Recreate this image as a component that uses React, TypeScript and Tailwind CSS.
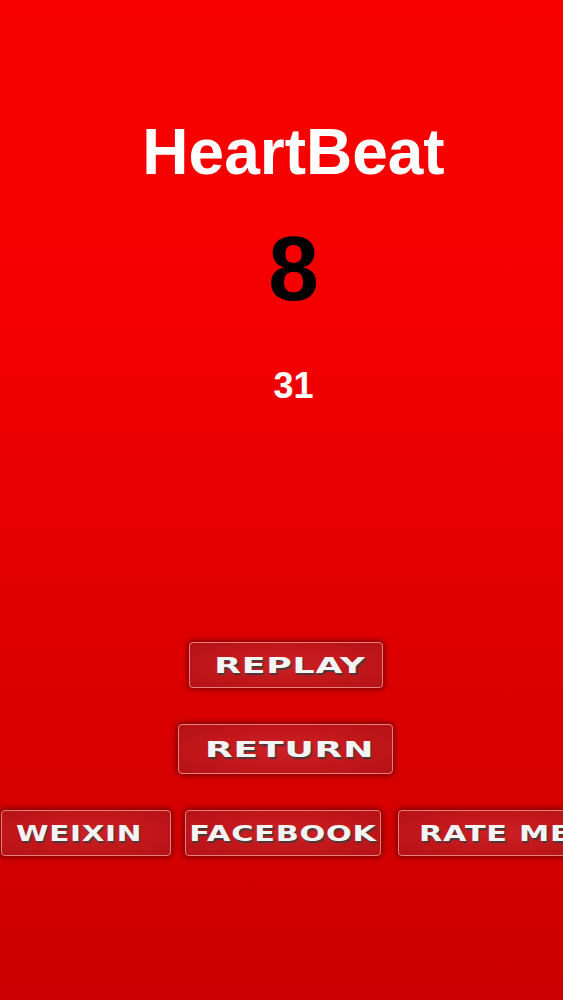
const buttonFont = { fontFamily: '"DejaVu Sans", "Liberation Sans", sans-serif' };

function GameButton({
  label,
  className,
  textClass = "scale-x-[1.38]",
}: {
  label: string;
  className: string;
  textClass?: string;
}) {
  return (
    <button
      className={`shrink-0 flex items-center justify-center rounded-[4px] border border-[#e68080] bg-[radial-gradient(ellipse_at_center,#cc2226_0%,#c0161a_60%,#b51216_100%)] shadow-[0_0_5px_2px_rgba(110,0,0,0.75)] ${className}`}
    >
      <span
        style={buttonFont}
        className={`inline-block origin-center text-[22px] font-bold tracking-[0.5px] text-[#f4f4f4] [text-shadow:1px_2px_1px_rgba(60,60,60,0.9)] ${textClass}`}
      >
        {label}
      </span>
    </button>
  );
}

export default function App() {
  return (
    <div className="h-[1000px] w-full overflow-hidden bg-[linear-gradient(to_bottom,#f80000_0%,#f50000_30%,#e00000_60%,#cc0000_100%)]">
      <div
        className="flex flex-col items-center pl-[24px] text-white"
        style={{ fontFamily: '"Liberation Sans", Arial, sans-serif' }}
      >
        <h1 className="mt-[120px] text-[64px] font-bold leading-none">HeartBeat</h1>
        <p className="mt-[39px] text-[91px] font-bold leading-none text-black">8</p>
        <p className="mt-[54px] text-[36px] font-bold leading-none">31</p>
      </div>

      <div className="mt-[238px] flex flex-col items-center">
        <GameButton
          label="REPLAY"
          className="ml-[9px] h-[46px] w-[194px] pl-[7px]"
          textClass="scale-x-[1.58]"
        />
        <GameButton
          label="RETURN"
          className="mt-[36px] ml-[8px] h-[50px] w-[215px] pl-[8px]"
          textClass="scale-x-[1.64]"
        />
      </div>

      <div className="mt-[36px] flex w-[620px] gap-[14px] pl-[1px]">
        <GameButton label="WEIXIN" className="h-[46px] w-[170px] pr-[14px]" textClass="scale-x-[1.34]" />
        <GameButton label="FACEBOOK" className="h-[46px] w-[196px]" />
        <GameButton label="RATE ME" className="ml-[3px] h-[46px] w-[196px] pr-[2px]" />
      </div>
    </div>
  );
}
